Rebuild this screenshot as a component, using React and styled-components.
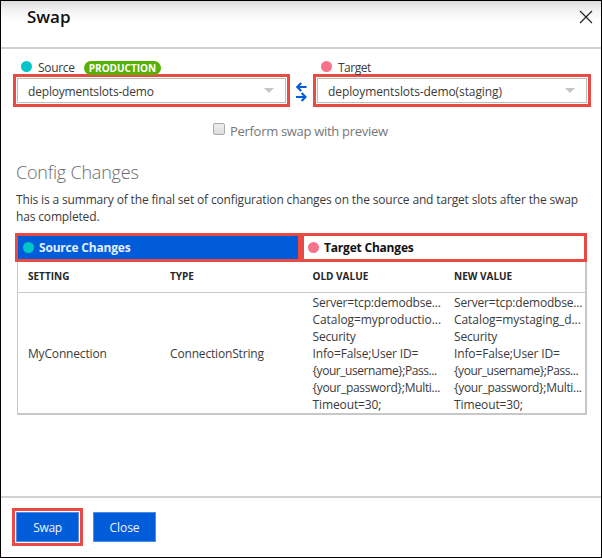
import React from 'react';
import styled, { createGlobalStyle } from 'styled-components';

const red = '#ea4a44';
const blue = '#015cda';
const line = '#c8c8c8';

const GlobalStyle = createGlobalStyle`
  *, *::before, *::after { box-sizing: border-box; }
  body {
    margin: 0;
    background: #fff;
    color: #3b3b3b;
    font: 12px/17px "Open Sans", "Noto Sans", sans-serif;
  }
  h1, h2, p { margin: 0; }
`;

const Dialog = styled.main`
  display: flex;
  flex-direction: column;
  width: 602px;
  height: 558px;
  border: 1px solid #000;
  overflow: hidden;
`;

const Header = styled.header`
  display: flex;
  flex: none;
  align-items: flex-start;
  justify-content: space-between;
  height: 48px;
  padding: 4px 8px 0 26px;
  border-bottom: 2px solid #cfcfcf;
  background: linear-gradient(#dddbdd, #f3f2f3 9px, #fff 20px);
`;

const Title = styled.h1`
  color: #111;
  font-size: 17px;
  font-weight: 600;
  line-height: 24px;
  letter-spacing: -0.05px;
`;

const CloseButton = styled.button`
  width: 14px;
  height: 14px;
  margin-top: 5px;
  padding: 0;
  border: 0;
  background: none;
  svg { display: block; }
`;

const Body = styled.section`
  flex: 1;
  padding: 10px 14px 0 12px;
`;

const SlotRow = styled.div`
  display: grid;
  grid-template-columns: 277px 23px 278px;
  align-items: end;
`;

const SlotLabel = styled.div`
  display: flex;
  align-items: center;
  height: 15px;
  padding-left: 8px;
  letter-spacing: ${(p) => p.$spacing || '-0.3px'};
`;

const SlotName = styled.span`
  margin-top: 2px;
`;

const Dot = styled.span`
  flex: none;
  width: 11px;
  height: 11px;
  margin-right: 6px;
  border-radius: 50%;
  background: ${(p) => (p.$target ? '#f9728b' : '#00c6c8')};
`;

const Badge = styled.span`
  height: 14px;
  margin: 2px 0 0 9px;
  padding: 0 5px;
  border-radius: 7px;
  background: #57b002;
  color: #fff;
  font-size: 10px;
  font-weight: 700;
  line-height: 14px;
  letter-spacing: 0;
`;

const Highlight = styled.div`
  border: 3px solid ${red};
`;

const SelectFrame = styled(Highlight)`
  height: 33px;
  padding: 1px;
`;

const Select = styled.div`
  display: flex;
  align-items: center;
  justify-content: space-between;
  height: 25px;
  padding: 2px 11px 0 10px;
  border: 1px solid #bdbdbd;
  letter-spacing: ${(p) => p.$spacing};
`;

const Caret = styled.span`
  margin-top: -3px;
  border: 5px solid transparent;
  border-top-color: #c6c6c6;
  border-bottom: 0;
`;

const SwapIcon = styled.svg`
  justify-self: center;
  margin-bottom: 5px;
  fill: none;
  stroke: ${blue};
  stroke-width: 2.1;
`;

const Preview = styled.label`
  display: flex;
  align-items: center;
  height: 17px;
  margin: 16px 0 0 201px;
  color: #777;
  font-size: 13px;
  letter-spacing: -0.3px;
`;

const Checkbox = styled.span`
  width: 12px;
  height: 12px;
  margin: -5px 5px 0 -1px;
  border: 1px solid #a9a9a9;
  border-radius: 2px;
  background: linear-gradient(#eee, #dcdcdc);
`;

const SectionTitle = styled.h2`
  margin: 20px 0 0 3px;
  color: #6b6b6b;
  font-size: 18px;
  font-weight: 300;
  line-height: 24px;
  letter-spacing: -0.2px;
`;

const Summary = styled.p`
  margin: 7px 0 0 3px;
  letter-spacing: -0.155px;
  white-space: nowrap;
`;

const TabRow = styled.div`
  display: grid;
  grid-template-columns: 286px 286px;
  margin: 8px 0 0 2px;
`;

const Tab = styled(Highlight)`
  display: flex;
  align-items: center;
  height: 29px;
  padding: 0 0 0 ${(p) => (p.$active ? '5px' : '4px')};
  background: ${(p) => (p.$active ? blue : '#fff')};
  color: ${(p) => (p.$active ? '#e4efff' : '#111')};
  font-weight: 700;
  letter-spacing: -0.2px;
  ${Dot} { margin-right: 5px; }
`;

const Table = styled.div`
  width: 570px;
  height: 153px;
  margin-left: 4px;
  border: solid ${line};
  border-width: 0 2px 2px 1px;
`;

const Row = styled.div`
  display: grid;
  grid-template-columns: 142px 142.5px 141.5px 1fr;
  align-items: center;
  padding-left: 10px;
`;

const HeadRow = styled(Row)`
  height: 31px;
  padding-bottom: 2px;
  border-bottom: 1px solid ${line};
  color: #262626;
  font-size: 10px;
  font-weight: 700;
`;

const DataRow = styled(Row)`
  height: 120px;
  letter-spacing: -0.17px;
`;

const Value = styled.div`
  align-self: start;
  padding-top: 1px;
  white-space: nowrap;
`;

const ValueLine = styled.div`
  letter-spacing: ${(p) => p.$spacing};
`;

const Footer = styled.footer`
  display: flex;
  flex: none;
  align-items: flex-start;
  gap: 10px;
  height: 61px;
  padding: 10px 11px 0;
  border-top: 2px solid #d2d2d2;
`;

const ButtonFrame = styled(Highlight)`
  width: 71px;
  height: 38px;
  padding: 1px;
`;

const Button = styled.button`
  display: block;
  width: 63px;
  height: 30px;
  padding: 0;
  border: 1px solid #4d8ee8;
  background: ${blue};
  color: #f0f6ff;
  font: inherit;
  letter-spacing: ${(p) => p.$spacing};
  ${ButtonFrame} + & { margin-top: 4px; }
`;

const valueLines = (server, catalog) => [
  [server, '-0.18px'],
  [catalog, '-0.06px'],
  ['Security', '-0.2px'],
  ['Info=False;User ID=', '-0.14px'],
  ['{your_username};Pass...', '-0.44px'],
  ['{your_password};Multi...', '-0.31px'],
  ['Timeout=30;', '-0.11px'],
];

const oldValue = valueLines('Server=tcp:demodbse...', 'Catalog=myproductio...');
const newValue = valueLines('Server=tcp:demodbse...', 'Catalog=mystaging_d...');

const ConnectionValue = ({ lines }) => (
  <Value>
    {lines.map(([text, spacing]) => (
      <ValueLine key={text} $spacing={spacing}>{text}</ValueLine>
    ))}
  </Value>
);

export default function App() {
  return (
    <>
      <GlobalStyle />
      <Dialog>
        <Header>
          <Title>Swap</Title>
          <CloseButton aria-label="Close">
            <svg width="14" height="14" fill="none" stroke="#222" strokeWidth="1.2">
              <path d="M1 1L13 13M13 1L1 13" />
            </svg>
          </CloseButton>
        </Header>
        <Body>
          <SlotRow>
            <div>
              <SlotLabel>
                <Dot />
                <SlotName>Source</SlotName>
                <Badge>PRODUCTION</Badge>
              </SlotLabel>
              <SelectFrame>
                <Select $spacing="-0.18px">deploymentslots-demo<Caret /></Select>
              </SelectFrame>
            </div>
            <SwapIcon width="11" height="20" viewBox="0 0 11 20">
              <path d="M10.5 5H1.5M5.2 1L1.3 5L5.2 9" />
              <path d="M0 15H9.2M5.6 11L9.5 15L5.6 19" />
            </SwapIcon>
            <div>
              <SlotLabel $spacing="-0.5px">
                <Dot $target />
                <SlotName>Target</SlotName>
              </SlotLabel>
              <SelectFrame>
                <Select $spacing="-0.09px">deploymentslots-demo(staging)<Caret /></Select>
              </SelectFrame>
            </div>
          </SlotRow>
          <Preview>
            <Checkbox role="checkbox" aria-checked="false" />
            Perform swap with preview
          </Preview>
          <SectionTitle>Config Changes</SectionTitle>
          <Summary>
            This is a summary of the final set of configuration changes on the source and target slots after the swap
            <br />
            has completed.
          </Summary>
          <TabRow>
            <Tab $active><Dot />Source Changes</Tab>
            <Tab><Dot $target />Target Changes</Tab>
          </TabRow>
          <Table>
            <HeadRow>
              <span>SETTING</span>
              <span>TYPE</span>
              <span>OLD VALUE</span>
              <span>NEW VALUE</span>
            </HeadRow>
            <DataRow>
              <span>MyConnection</span>
              <span>ConnectionString</span>
              <ConnectionValue lines={oldValue} />
              <ConnectionValue lines={newValue} />
            </DataRow>
          </Table>
        </Body>
        <Footer>
          <ButtonFrame><Button $spacing="-0.3px">Swap</Button></ButtonFrame>
          <Button $spacing="-0.07px">Close</Button>
        </Footer>
      </Dialog>
    </>
  );
}
